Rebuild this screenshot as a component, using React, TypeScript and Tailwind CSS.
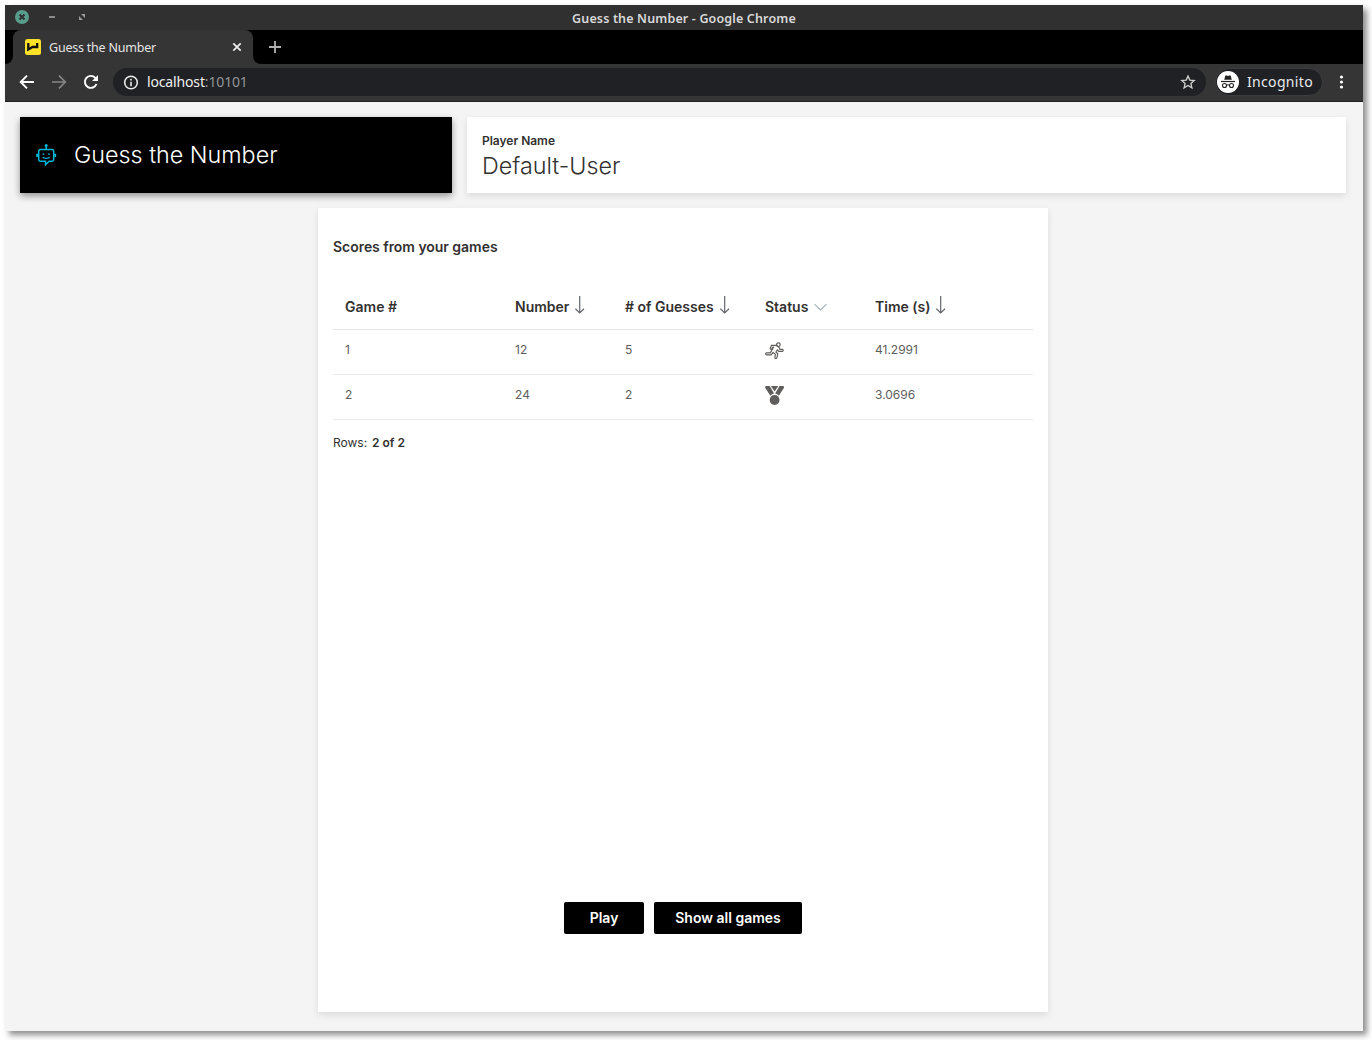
import React from "react";

const UI = "font-['Noto_Sans',sans-serif]";

function BotIcon() {
  return (
    <svg className="ml-px" width="22" height="24" viewBox="0 0 22 24" fill="none" stroke="#00b8d9" strokeWidth="1.5">
      <path d="M10.2 2.500v4M4.300 6.600h11.800a1.600 1.600 0 0 1 1.600 1.600v8.400a1.600 1.600 0 0 1-1.600 1.600h-3l-3.600 3.600v-3.600H4.300a1.600 1.600 0 0 1-1.600-1.600V8.200a1.600 1.600 0 0 1 1.600-1.600Z" />
      <path d="M1.200 10.700v3.400M19.200 10.700v3.400" strokeWidth="1.900" />
      <path d="M6.700 14c1 1.900 6 1.900 7 0" strokeWidth="1.300" />
      <g fill="#00b8d9" stroke="none">
        <circle cx="10.200" cy="2.500" r="1.500" />
        <circle cx="7.400" cy="11.100" r=".9" />
        <circle cx="13" cy="11.100" r=".9" />
      </g>
    </svg>
  );
}

function DownArrow() {
  return (
    <svg className="ml-[5px] -mt-1" width="12" height="20" viewBox="0 0 12 20" fill="none" stroke="#62666c" strokeWidth="1.2">
      <path d="M5.700 1v17M1.400 13.800 5.700 18l4.300-4.200" />
    </svg>
  );
}

function RunIcon() {
  return (
    <svg width="20" height="20" viewBox="0 0 20 20" fill="none" stroke="#605e5c" strokeWidth="1.200" strokeLinejoin="round" strokeLinecap="round">
      <circle cx="13.400" cy="2.700" r="1.800" />
      <path d="M5.200 6.300 6.600 3.300h4.600l2.600 1.800 1 2.200h2.400a1 1 0 0 1 0 2h-3.500l-1.300-1.500-1.500 2.200 1.900 1.700-.9 4a1 1 0 0 1-2-.3l.5-3-2.300-1.900-2 2.300H1.600a.9.900 0 0 1 0-1.900h3.700l3.200-5.700H7.800L6.800 7a.9.900 0 0 1-1.600-.7Z" />
    </svg>
  );
}

function MedalIcon() {
  return (
    <svg className="-mt-[2px]" width="20" height="20" viewBox="0 0 20 20" fill="#605e5c">
      <path d="M.7 1h4l4.400 7.400c-1.500.3-2.800 1-3.700 2.300L0 2.600ZM14.500 1h4l.7 1.600-5.400 8.100c-.9-1.300-2.100-2-3.700-2.300ZM5.900 1h7.400L9.600 6.500Z" />
      <circle cx="9.600" cy="15" r="4.900" />
    </svg>
  );
}

function TitleBar() {
  return (
    <div className={"relative flex h-[25px] items-center justify-center bg-[#303030] pt-[3px] " + UI}>
      <div className="absolute left-[10px] top-[5px] flex items-center">
        <svg width="76" height="14" viewBox="0 0 76 14" fill="none">
          <circle cx="7" cy="7" r="7" fill="#589d8c" />
          <path d="m4.500 4.500 5 5m0-5-5 5" stroke="#303030" strokeWidth="2" />
          <path d="M34 7h6" stroke="#9b9b9b" strokeWidth="1.700" />
          <path d="M66 4h4v4ZM64 6v4h4Z" fill="#9b9b9b" />
        </svg>
      </div>
      <span className="text-[12.500px] font-semibold leading-none tracking-[0.150px] text-[#d8d8d8]">Guess the Number - Google Chrome</span>
    </div>
  );
}

function TabStrip() {
  return (
    <div className={"flex h-[34px] bg-black " + UI}>
      <div className="w-2 bg-[#353535]">
        <div className="h-full rounded-br-lg bg-black" />
      </div>
      <div className="flex h-[34px] w-[240px] items-center rounded-t-lg bg-[#353535] pl-3 pr-[11px]">
        <svg width="16" height="16" viewBox="0 0 16 16" fill="none">
          <rect width="16" height="16" rx="2.500" fill="#ffe128" />
          <path d="M3.300 4v6.500L7.500 8h4.700V4" stroke="#111" strokeWidth="2.300" />
        </svg>
        <span className="ml-2 mt-[2px] whitespace-nowrap text-[12.500px] leading-none tracking-[-0.220px] text-[#e4e4e4]">Guess the Number</span>
        <svg className="ml-auto" width="10" height="10" viewBox="0 0 10 10" stroke="#eee" strokeWidth="1.700"><path d="m1.300 1.300 7.400 7.400m0-7.400L1.300 8.700" /></svg>
      </div>
      <div className="w-2 bg-[#353535]">
        <div className="h-full rounded-bl-lg bg-black" />
      </div>
      <svg className="ml-2 mt-[11px]" width="12" height="12" viewBox="0 0 12 12" stroke="#b0b0b0" strokeWidth="1.800"><path d="M6 0v12M0 6h12" /></svg>
    </div>
  );
}

function Toolbar() {
  return (
    <div className={"flex h-[38px] items-center border-b border-[#222] bg-[#353535] pl-[14px] pb-[1px] " + UI}>
      <svg width="16" height="16" viewBox="0 0 16 16" fill="none" stroke="#fff" strokeWidth="1.900"><path d="M15 8H2M8 1.700 1.700 8 8 14.300" /></svg>
      <svg className="ml-4" width="16" height="16" viewBox="0 0 16 16" fill="none" stroke="#868686" strokeWidth="1.700"><path d="M1 8h13M8 1.700 14.300 8 8 14.300" /></svg>
      <svg className="ml-4" width="16" height="16" viewBox="0 0 16 16" fill="none" stroke="#fff" strokeWidth="1.900">
        <path d="M13.500 10A6 6 0 1 1 12.300 3.800L14 5.500" />
        <path d="M15 1v6H9Z" fill="#fff" stroke="none" />
      </svg>
      <div className="ml-[14px] flex h-7 w-[1093px] items-center rounded-full bg-[#202124] pl-[10px] pr-[10px]">
        <svg width="16" height="15" viewBox="0 0 16 15" fill="none" stroke="#e8e8e8" strokeWidth="1.600"><circle cx="8" cy="7.500" r="6.300" /><path d="M8 6.700v4.500M8 3.800v1.700" /></svg>
        <span className="ml-2 text-sm leading-none tracking-[-0.150px] text-[#f0f0f0]">localhost<span className="text-[#929496]">:10101</span></span>
        <svg className="ml-auto" width="16" height="16" viewBox="0 0 16 16" fill="none" stroke="#d0d0d0" strokeWidth="1.300"><path d="m8 2 1.800 4.100 4.400.4-3.300 2.900 1 4.400L8 11.500l-3.900 2.300 1-4.400-3.300-2.900 4.400-.4Z" /></svg>
      </div>
      <div className="ml-[9px] flex h-[28px] w-[108px] items-center rounded-full border border-[#3b3c3e] bg-[#202124] pl-px">
        <svg width="22" height="22" viewBox="0 0 22 22" fill="none">
          <circle cx="11" cy="11" r="11" fill="#fff" />
          <path d="m7.200 8.700 1.200-4.100h1.300l1.300.5 1.300-.5h1.300l1.200 4.100Z" fill="#222" />
          <path d="M4 10.500h14" stroke="#222" strokeWidth="1.200" />
          <g stroke="#222" strokeWidth="1.100"><circle cx="7.500" cy="14.500" r="2" /><circle cx="14.500" cy="14.500" r="2" /><path d="M9.500 14.200q1.500-.8 3 0" /></g>
        </svg>
        <span className="ml-2 text-sm leading-none tracking-[0.330px] text-[#e8eaed]">Incognito</span>
      </div>
      <svg className="ml-4" width="5" height="14" viewBox="0 0 5 14" fill="#fff"><circle cx="2.500" cy="2" r="1.600" /><circle cx="2.500" cy="7" r="1.600" /><circle cx="2.500" cy="12" r="1.600" /></svg>
    </div>
  );
}

const COLS = "grid grid-cols-[170px_110px_140px_110px_170px] [&>div]:pl-3";

function Row({ cells }: { cells: React.ReactNode[] }) {
  return (
    <div className={"h-[45px] border-b border-[#edebe9] text-xs leading-4 text-[#605e5c] " + COLS}>
      {cells.map((c, i) => <div key={i} className="pt-3">{c}</div>)}
    </div>
  );
}

export default function App() {
  return (
    <div className="h-[1040px] w-[1372px] overflow-hidden bg-white pl-[5px] pt-[5px]">
      <div className="flex h-[1026px] w-[1358px] flex-col bg-[#f4f4f4] shadow-[4px_4px_6px_rgba(0,0,0,0.45)]">
        <TitleBar />
        <TabStrip />
        <Toolbar />
        <main className="flex-1 px-[15px] pt-[15px] font-['Inter',sans-serif] text-[#323130]">
          <div className="flex gap-[15px]">
            <header className="flex h-[76px] w-[432px] items-center bg-black pl-[15px] text-white shadow-[0_3px_7px_rgba(0,0,0,0.4)]">
              <BotIcon />
              <h1 className="ml-4 text-[23.300px] font-light leading-8">Guess the Number</h1>
            </header>
            <section className="h-[76px] w-[879px] bg-white pl-[15px] pt-4 shadow-[0_3px_7px_rgba(0,0,0,0.1)]">
              <div className="text-xs font-semibold leading-4 tracking-[-0.020px]">Player Name</div>
              <div className="text-[23.300px] font-light leading-[34px]">Default-User</div>
            </section>
          </div>
          <section className="ml-[298px] mt-[15px] flex h-[804px] w-[730px] flex-col bg-white px-[15px] shadow-[0_3px_7px_rgba(0,0,0,0.1)]">
            <h2 className="mt-[29px] text-sm font-semibold leading-5 tracking-[-0.040px]">Scores from your games</h2>
            <div className={"mt-[37px] h-[36px] border-b border-[#e5e3e1] text-sm font-semibold leading-5 [&>div]:flex [&>div]:h-[26px] [&>div]:items-center " + COLS}>
              <div>Game #</div>
              <div>Number<DownArrow /></div>
              <div># of Guesses<DownArrow /></div>
              <div>Status<svg className="ml-[6px]" width="13" height="8" viewBox="0 0 13 8" fill="none" stroke="#9fb3bc" strokeWidth="1.100"><path d="m.5 1.200 6 5.700 6-5.700" /></svg></div>
              <div>Time (s)<DownArrow /></div>
            </div>
            <Row cells={["1", "12", "5", <RunIcon />, "41.2991"]} />
            <Row cells={["2", "24", "2", <MedalIcon />, "3.0696"]} />
            <div className="mt-[15px] text-xs leading-4">Rows: <b className="ml-[1.500px] font-semibold">2 of 2</b></div>
            <div className="mb-[78px] mt-auto flex justify-center gap-[10px] text-sm font-semibold text-white">
              <button className="h-8 w-20 rounded-[2px] bg-black">Play</button>
              <button className="h-8 w-[148px] rounded-[2px] bg-black">Show all games</button>
            </div>
          </section>
        </main>
      </div>
    </div>
  );
}
